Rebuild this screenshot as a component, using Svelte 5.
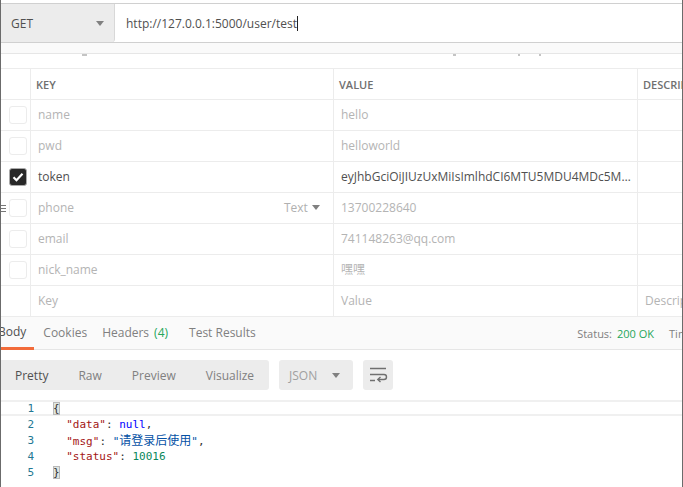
<script>
  const rows = [
    { key: "name", value: "hello", on: false },
    { key: "pwd", value: "helloworld", on: false },
    { key: "token", value: "eyJhbGciOiJIUzUxMiIsImlhdCI6MTU5MDU4MDc5MiwiZXhwIjoxNTkw", on: true },
    { key: "phone", value: "13700228640", on: false, hover: true },
    { key: "email", value: "741148263@qq.com", on: false },
    { key: "nick_name", value: "嘿嘿", on: false }
  ];
  const tabs = ["Cookies", "Headers", "Test Results"];
  const modes = ["Pretty", "Raw", "Preview", "Visualize"];
</script>

<div class="window">
  <div class="request">
    <div class="method">
      <span>GET</span>
      <i class="caret"></i>
    </div>
    <div class="url"><span>http://127.0.0.1:5000/user/test</span><b class="cursor"></b></div>
  </div>
  <div class="strip"></div>
  <div class="scrolled">
    <i style="left:81px;width:5px"></i>
    <i style="left:452px;width:3px"></i>
    <i style="left:517px;width:2px"></i>
    <i style="left:538px;width:2px"></i>
  </div>

  <div class="table">
    <div class="row head">
      <div class="check"></div>
      <div class="key">KEY</div>
      <div class="value">VALUE</div>
      <div class="desc">DESCRIPTION</div>
    </div>
    {#each rows as row}
      <div class="row" class:on={row.on}>
        <div class="check">
          {#if row.hover}
            <span class="grip"></span>
          {/if}
          <span class="box">
            {#if row.on}
              <svg width="12" height="10" viewBox="0 0 12 10"><path d="M1.5 5.2 4.5 8.2 10.5 1.8" fill="none" stroke="#fff" stroke-width="2.2" /></svg>
            {/if}
          </span>
        </div>
        <div class="key">
          <span>{row.key}</span>
          {#if row.hover}
            <span class="type">Text <i class="caret small"></i></span>
          {/if}
        </div>
        <div class="value"><span class="clip">{row.value}</span></div>
        <div class="desc"></div>
      </div>
    {/each}
    <div class="row blank">
      <div class="check"></div>
      <div class="key">Key</div>
      <div class="value">Value</div>
      <div class="desc">Description</div>
    </div>
  </div>

  <div class="tabs">
    <div class="tab active">Body</div>
    {#each tabs as tab}
      <div class="tab">{tab}{#if tab === "Headers"}<em>(4)</em>{/if}</div>
    {/each}
    <div class="status">Status:<em>200 OK</em><span>Time: 30ms</span></div>
  </div>

  <div class="toolbar">
    <div class="modes">
      {#each modes as mode, i}
        <span class:current={i === 0}>{mode}</span>
      {/each}
    </div>
    <div class="format">JSON <i class="caret"></i></div>
    <div class="wrap">
      <svg width="20" height="16" viewBox="0 0 20 16" fill="none" stroke="#6f6f6f" stroke-width="1.4">
        <path d="M2 1.5H18M2 7.5H16A2.5 2.5 0 0 1 16 12.5H10M2 13.5H7" />
        <path d="M12.5 10 9.8 12.5 12.5 15" />
      </svg>
    </div>
  </div>

  <div class="code">
    <div class="line first"><span class="num">1</span><span class="text"><span class="brace">{"{"}</span></span></div>
    <div class="line"><span class="num">2</span><span class="text">{"  "}<span class="prop">"data"</span>: <span class="null">null</span>,</span></div>
    <div class="line"><span class="num">3</span><span class="text">{"  "}<span class="prop">"msg"</span>: <span class="str">"<span class="cjk">请登录后使用</span>"</span>,</span></div>
    <div class="line"><span class="num">4</span><span class="text">{"  "}<span class="prop">"status"</span>: <span class="int">10016</span></span></div>
    <div class="line"><span class="num">5</span><span class="text"><span class="brace">{"}"}</span></span></div>
  </div>
</div>

<style>
  :global(body) {
    background: #fff;
    overflow: hidden;
  }

  .window {
    width: 683px;
    height: 487px;
    box-sizing: border-box;
    border-left: 1px solid #6b6b6b;
    border-right: 1px solid #6b6b6b;
    padding-top: 3px;
    overflow: hidden;
    position: relative;
    font-family: "Open Sans", "Noto Sans CJK SC", sans-serif;
    font-size: 12px;
    color: #505050;
  }

  .request {
    display: flex;
    height: 38px;
    border-top: 1px solid #d0d0d0;
    border-bottom: 1px solid #d0d0d0;
  }

  .method {
    width: 114px;
    background: #ececec;
    display: flex;
    align-items: center;
    justify-content: space-between;
    padding: 0 10px;
    box-sizing: border-box;
    border-right: 1px solid #d8d8d8;
    border-bottom-right-radius: 3px;
  }

  .caret {
    display: inline-block;
    width: 0;
    height: 0;
    border-left: 4px solid transparent;
    border-right: 4px solid transparent;
    border-top: 5px solid #808080;
  }

  .url {
    display: flex;
    align-items: center;
    padding-left: 11px;
    color: #505050;
  }

  .cursor {
    width: 1px;
    height: 15px;
    background: #222;
  }

  .strip {
    height: 10px;
    background: #fafafa;
    border-bottom: 1px solid #e6e6e6;
  }

  .scrolled {
    height: 14px;
    position: relative;
  }

  .scrolled i {
    position: absolute;
    top: 0;
    height: 2px;
    background: #c4c4c4;
  }

  .table {
    border-top: 1px solid #ececec;
  }

  .row {
    display: grid;
    grid-template-columns: 30px 303px 304px 60px;
    height: 31px;
    box-sizing: border-box;
    border-bottom: 1px solid #ececec;
    color: #b4b4b4;
    align-items: stretch;
  }

  .row > div {
    display: flex;
    align-items: center;
    border-right: 1px solid #ececec;
    padding-left: 7px;
    padding-bottom: 2px;
    min-width: 0;
    white-space: nowrap;
    overflow: hidden;
    position: relative;
  }

  .row.head > div {
    padding-left: 5px;
    padding-bottom: 0;
  }

  .row > .key {
    justify-content: space-between;
    padding-right: 13px;
  }

  .row > .check {
    padding-left: 8px;
    padding-bottom: 0;
  }

  .row.on {
    color: #505050;
  }

  .head {
    color: #707070;
    font-size: 11px;
    font-weight: 600;
  }

  .box {
    width: 16px;
    height: 16px;
    border: 1px solid #ececec;
    border-radius: 3px;
    display: flex;
    align-items: center;
    justify-content: center;
    background: #fff;
  }

  .on .box {
    background: #282828;
    border-color: #aaa;
  }

  .grip {
    position: absolute;
    left: 0;
    top: 12px;
    width: 5px;
    height: 7px;
    background: repeating-linear-gradient(#777 0 1px, transparent 1px 3px);
  }

  .type {
    color: #b0b0b0;
  }

  .caret.small {
    margin-left: 1px;
    vertical-align: 2px;
  }

  .clip {
    display: block;
    width: 290px;
    overflow: hidden;
    text-overflow: ellipsis;
  }

  .tabs {
    display: flex;
    height: 33px;
    margin-left: -10px;
    background: #fafafa;
    border-bottom: 1px solid #e6e6e6;
    box-sizing: border-box;
    color: #808080;
    align-items: stretch;
    gap: 16px;
  }

  .tab {
    display: flex;
    align-items: center;
    white-space: pre;
    box-sizing: border-box;
    padding-bottom: 2px;
  }

  .tab:nth-child(2) {
    margin-right: -1px;
  }

  .tab:nth-child(3) {
    margin-right: 5px;
  }

  .tab.active {
    color: #505050;
    padding-left: 7px;
    padding-right: 8px;
    margin-right: -7px;
    border-bottom: 3px solid #f26b3a;
    padding-top: 1px;
    height: 33px;
  }

  .tab em,
  .status em {
    font-style: normal;
    color: #26a65b;
  }

  .tab em {
    margin-left: 5px;
  }

  .status {
    margin-left: auto;
    margin-right: -46px;
    font-size: 11px;
    align-self: center;
    white-space: pre;
    color: #808080;
  }

  .status em {
    margin-left: 5px;
  }

  .status span {
    margin-left: 15px;
  }

  .toolbar {
    display: flex;
    margin-top: 10px;
    gap: 10px;
    height: 30px;
  }

  .modes {
    width: 268px;
    background: #ececec;
    border-radius: 0 3px 3px 0;
    display: flex;
    align-items: center;
    padding-left: 14px;
    gap: 30px;
    box-sizing: border-box;
    color: #808080;
  }

  .modes .current {
    color: #505050;
  }

  .format {
    width: 74px;
    box-sizing: border-box;
    background: #ececec;
    border-radius: 3px;
    color: #a0a0a0;
    display: flex;
    align-items: center;
    justify-content: space-between;
    padding: 0 13px 0 10px;
  }

  .wrap {
    width: 30px;
    background: #ececec;
    border-radius: 3px;
    display: flex;
    align-items: center;
    justify-content: center;
  }

  .code {
    margin-top: 10px;
    font-family: "DejaVu Sans Mono", "Noto Sans CJK SC", monospace;
    font-size: 11px;
    line-height: 18px;
    color: #333;
  }

  .line {
    display: flex;
    height: 16px;
    white-space: pre;
  }

  .line.first {
    border-top: 2px solid #f0f0f0;
    border-bottom: 2px solid #f0f0f0;
    box-sizing: border-box;
    line-height: 14px;
  }

  .num {
    width: 33px;
    text-align: right;
    color: #237893;
  }

  .text {
    margin-left: 19px;
  }

  .brace {
    background: #dfe5e0;
    outline: 1px solid #b9b9b9;
    outline-offset: -1px;
  }

  .prop {
    color: #a31515;
  }

  .null {
    color: #0000ff;
  }

  .str {
    color: #0451a5;
  }

  .cjk {
    font-size: 12px;
  }

  .int {
    color: #09885a;
  }
</style>
